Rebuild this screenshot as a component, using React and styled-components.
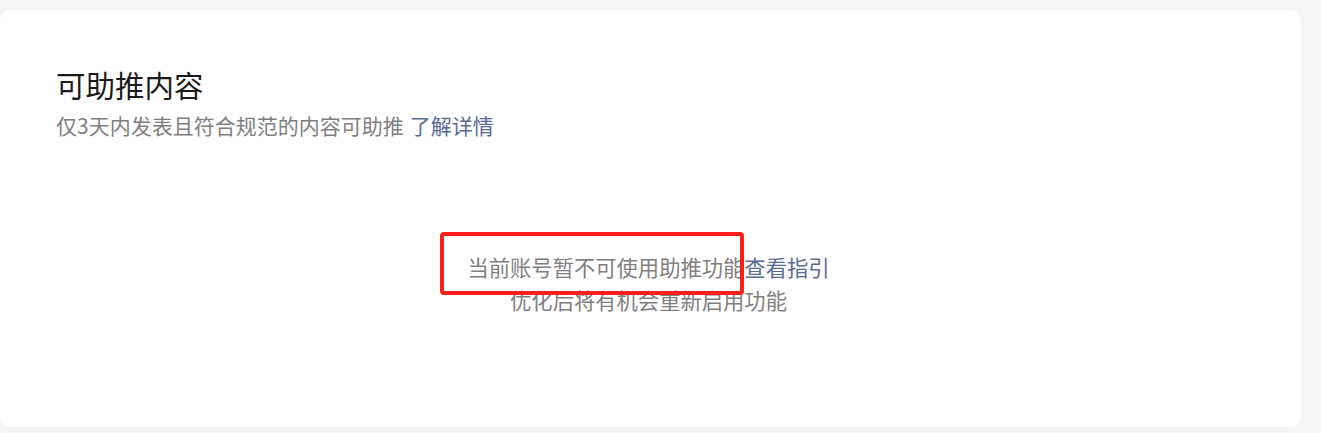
import styled, { createGlobalStyle } from "styled-components"

const GlobalStyle = createGlobalStyle`
    html, body {
        margin: 0;
        padding: 0;
        background: #f4f5f7;
        font-family: "Noto Sans CJK SC", "Noto Sans", sans-serif;
    }
`

const Page = styled.div`
    padding: 10px 20px 6px 0;
    height: 433px;
    box-sizing: border-box;
    display: flex;
`

const Card = styled.section`
    flex: 1;
    background: #fff;
    border-radius: 10px;
    padding: 53px 56px 0;
    display: flex;
    flex-direction: column;
`

const Title = styled.h2`
    margin: 0;
    font-size: 29.5px;
    line-height: 42px;
    font-weight: 400;
    color: #1a1a1a;
`

const Desc = styled.p`
    margin: 5px 0 0;
    font-size: 21px;
    line-height: 30px;
    color: #7f7f7f;
`

const Link = styled.a`
    color: #576b95;
    text-decoration: none;
    cursor: pointer;
    margin-left: ${props => props.gap || "0"};
`

const Empty = styled.div`
    flex: 1;
    display: flex;
    flex-direction: column;
    align-items: center;
    justify-content: center;
    text-align: center;
    font-size: 21.3px;
    line-height: 33px;
    color: #7f7f7f;
    margin: 0 -56px;
    padding: 0 4px 2px 0;
`

const Line = styled.div`
    white-space: nowrap;
`

const Marked = styled.span`
    position: relative;
`

const Highlight = styled.span`
    position: absolute;
    top: -19px;
    bottom: -13px;
    left: -27px;
    right: 0;
    border: 4px solid #ff1f1a;
    border-radius: 4px;
    pointer-events: none;
`

const App = () => {
    return (
        <>
            <GlobalStyle />
            <Page>
                <Card>
                    <Title>可助推内容</Title>
                    <Desc>
                        仅3天内发表且符合规范的内容可助推
                        <Link gap="6px">了解详情</Link>
                    </Desc>
                    <Empty>
                        <Line>
                            <Marked>
                                当前账号暂不可使用助推功能
                                <Highlight />
                            </Marked>
                            <Link>查看指引</Link>
                        </Line>
                        <Line>优化后将有机会重新启用功能</Line>
                    </Empty>
                </Card>
            </Page>
        </>
    )
}

export default App
